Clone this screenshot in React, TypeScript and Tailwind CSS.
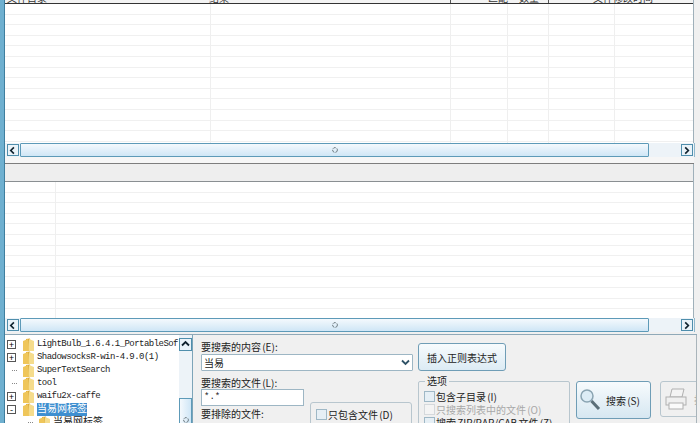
import React from "react";

const mono = "font-['Liberation_Mono','Noto_Sans_CJK_SC',monospace]";
const cjk = "font-['Noto_Sans_CJK_SC','Liberation_Sans',sans-serif]";

function Arrow({ dir }: { dir: "left" | "right" | "up" }) {
  const d = dir === "left" ? "M6.5 2 L3 5.5 L6.5 9" : dir === "right" ? "M3.5 2 L7 5.5 L3.5 9" : "M2 6.5 L5.5 3 L9 6.5";
  return (
    <svg width="11" height="11" viewBox="0 0 11 11">
      <path d={d} fill="none" stroke="#10222e" strokeWidth="1.8" />
    </svg>
  );
}

function ScrollGrip() {
  return (
    <svg width="8" height="8" viewBox="0 0 8 8">
      <circle cx="4" cy="4" r="2.4" fill="none" stroke="#6d7a80" strokeWidth="1" strokeDasharray="3 1" />
    </svg>
  );
}

function HScroll() {
  return (
    <div className="h-[14px] mr-[5px] flex items-center bg-[#edf3f8] pl-[2px] pr-[1px] border-r border-[#8fb8cc]">
      <div className="w-[12px] h-[12px] border border-[#4f8eac] bg-[#eaf3f9] flex items-center justify-center shrink-0">
        <Arrow dir="left" />
      </div>
      <div className="w-[629px] h-[14px] border border-[#5d9ab8] bg-gradient-to-b from-[#f4f9fd] to-[#cfe6f6] rounded-[1px] flex items-center justify-center shrink-0 ml-[1px]">
        <ScrollGrip />
      </div>
      <div className="flex-1" />
      <div className="w-[12px] h-[12px] border border-[#4f8eac] bg-[#eaf3f9] flex items-center justify-center shrink-0">
        <Arrow dir="right" />
      </div>
    </div>
  );
}

function Grid({ cols, height }: { cols: number[]; height: number }) {
  const rows = Array.from({ length: Math.floor(height / 10.6) });
  return (
    <div className="relative bg-white overflow-hidden" style={{ height }}>
      {rows.map((_, i) => (
        <div key={i} className="h-[10.6px] border-b border-[#f0f0f0]" />
      ))}
      {cols.map((x) => (
        <div key={x} className="absolute top-0 bottom-0 w-px bg-[#efefef]" style={{ left: x }} />
      ))}
    </div>
  );
}

function Folder() {
  return (
    <svg width="16" height="14" viewBox="0 0 16 14" className="shrink-0">
      <path d="M6 1 L10 0.5 L11 13 L6 13 Z" fill="#d9a93a" />
      <path d="M9 1 L14 3 L14 13 L8 13 Z" fill="#f5dc8c" />
      <path d="M3 3 L8 1 L9 13 L3 13 Z" fill="#efc65a" />
    </svg>
  );
}

function Tree({ label, sign, selected, indent, zh }: { label: string; sign?: string; selected?: boolean; indent?: boolean; zh?: boolean }) {
  return (
    <div className={`h-[13px] flex items-center ${indent ? "pl-[16px]" : ""}`}>
      <div className="w-[11px] flex justify-center shrink-0">
        {sign ? (
          <div className="w-[9px] h-[9px] border border-[#555] bg-white text-[9px] leading-[7px] text-center text-black">{sign}</div>
        ) : (
          <div className="w-[8px] border-t border-dotted border-[#888] ml-[6px]" />
        )}
      </div>
      <div className="ml-[3px]">
        <Folder />
      </div>
      <span
        className={`ml-[1px] whitespace-nowrap leading-[13px] ${zh ? "text-[10px]" : "text-[9px] tracking-[-0.54px]"} ${mono} ${
          selected ? "bg-[#3f8fd0] text-white" : "text-[#222]"
        }`}
      >
        {label}
      </span>
    </div>
  );
}

function Check({ label, off }: { label: string; off?: boolean }) {
  return (
    <div className="h-[13px] flex items-center">
      <div className={`w-[11px] h-[11px] border ${off ? "border-[#d5d9dc] bg-[#f4f4f4]" : "border-[#9fb8c6] bg-[#e6eff5]"} shrink-0`} />
      <span className={`ml-[1px] whitespace-nowrap text-[10px] leading-[13px] [word-spacing:-1px] ${cjk} ${off ? "text-[#a8a8a8]" : "text-[#222]"}`}>{label}</span>
    </div>
  );
}

export default function App() {
  return (
    <div className={`w-[700px] h-[423px] overflow-hidden bg-[#f0f0f0] flex ${cjk}`}>
      <div className="w-[5px] shrink-0 bg-[#6fb0d0] border-r border-[#3f7f9f]" />
      <div className="flex-1 flex flex-col min-w-0">
        {/* upper result list */}
        <div className="mr-[6px] border-r border-[#9fb0ba]">
          <div className="h-[3px] relative overflow-hidden bg-[#f3f3f3]">
            <div className="absolute bottom-0 left-[2px] text-[10px] leading-[10px] text-[#333]">文件目录</div>
            <div className="absolute bottom-0 left-[204px] text-[10px] leading-[10px] text-[#333]">结果</div>
            <div className="absolute bottom-0 left-[445px] w-px h-[3px] bg-[#555]" />
            <div className="absolute bottom-0 left-[483px] text-[10px] leading-[10px] text-[#333]">匹配</div>
            <div className="absolute bottom-0 left-[514px] text-[10px] leading-[10px] text-[#333]">数量</div>
            <div className="absolute bottom-0 left-[543px] w-px h-[3px] bg-[#555]" />
            <div className="absolute bottom-0 left-[588px] text-[10px] leading-[10px] text-[#333]">文件修改时间</div>
          </div>
          <div className="h-px bg-[#333]" />
          <Grid cols={[205, 445, 502, 543, 609]} height={139} />
        </div>
        <HScroll />
        <div className="h-[7px] border-b border-[#7d7d7d] bg-[#f6f6f6] mr-[6px]" />
        {/* lower panel */}
        <div className="mr-[6px] border-r border-[#9fb0ba]">
          <div className="h-[18px] bg-[#eeeeee] border-b border-[#8a8f92]" />
          <Grid cols={[50]} height={136} />
        </div>
        <HScroll />
        <div className="h-[3px] mr-[3px] border-b border-[#8fa9b8]" />
        {/* search form */}
        <div className="flex-1 flex min-h-0 mr-[3px] border-r border-[#a9b4ba] overflow-hidden">
          <div className="w-[188px] shrink-0 flex bg-white border-r border-[#7da4b8] overflow-hidden">
            <div className="flex-1 pt-[3px] overflow-hidden pl-[1px]">
              <Tree label="LightBulb_1.6.4.1_PortableSof" sign="+" />
              <Tree label="ShadowsocksR-win-4.9.0(1)" sign="+" />
              <Tree label="SuperTextSearch" />
              <Tree label="tool" />
              <Tree label="waifu2x-caffe" sign="+" />
              <Tree label="当易网标签" sign="-" selected zh />
              <Tree label="当易网标签" indent zh />
            </div>
            <div className="w-[13px] shrink-0 bg-[#edf3f8] flex flex-col">
              <div className="h-[13px] mt-[3px] border border-[#4f8eac] bg-[#eaf3f9] flex items-center justify-center">
                <Arrow dir="up" />
              </div>
              <div className="mt-[47px] flex-1 border border-[#5d9ab8] bg-gradient-to-r from-[#f4f9fd] to-[#cfe6f6] flex justify-center pt-[17px]">
                <ScrollGrip />
              </div>
            </div>
          </div>
          <div className="w-[8px] shrink-0" />
          <div className="flex-1 flex min-w-0 text-[#222]">
            <div className="w-[217px] shrink-0 pt-[5px]">
              <div className="text-[10px] leading-[13px] [word-spacing:-1px]">要搜索的内容 (E):</div>
              <div className="w-[212px] h-[17px] bg-white border border-[#9db6c4] rounded-[1px] flex items-center justify-between px-[2px] mt-[1px]">
                <span className="text-[10px] leading-[15px]">当易</span>
                <svg width="9" height="7" viewBox="0 0 9 7">
                  <path d="M1 1.5 L4.5 5 L8 1.5" fill="none" stroke="#2f5266" strokeWidth="1.8" />
                </svg>
              </div>
              <div className="text-[10px] leading-[13px] mt-[5px] [word-spacing:-1px]">要搜索的文件 (L):</div>
              <div className="flex">
                <div className={`w-[103px] h-[17px] bg-white border border-[#9db6c4] text-[9px] leading-[15px] px-[2px] ${mono} shrink-0`}>*.*</div>
                <div className="ml-[6px] w-[102px] h-[30px] mt-[13px] border border-[#b8c6ce] rounded-[3px] px-[5px] pt-[5px] shrink-0">
                  <Check label="只包含文件 (D)" />
                  <div className="pl-[13px] text-[10px] leading-[13px] whitespace-nowrap">使用正则匹配</div>
                </div>
              </div>
              <div className="text-[10px] leading-[13px] -mt-[25px]">要排除的文件:</div>
            </div>
            <div className="w-[158px] shrink-0 pt-[8px]">
              <div className="w-[88px] h-[28px] rounded-[3px] border border-[#6f9db6] bg-gradient-to-b from-[#f7fbfd] to-[#dcebf4] flex items-center justify-center text-[10px]">
                插入正则表达式
              </div>
              <div className="relative w-[152px] h-[50px] mt-[10px] border border-[#b8c6ce] rounded-[2px] px-[5px] pt-[8px]">
                <div className="absolute -top-[8px] left-[6px] bg-[#f0f0f0] px-[2px] text-[10px] leading-[14px]">选项</div>
                <Check label="包含子目录 (I)" />
                <Check label="只搜索列表中的文件 (O)" off />
                <Check label="搜索 ZIP/RAR/CAB 文件 (Z)" />
              </div>
            </div>
            <div className="pt-[46px] flex gap-[9px]">
              <div className="w-[75px] h-[38px] shrink-0 rounded-[3px] border border-[#6f9db6] bg-gradient-to-b from-[#f7fbfd] to-[#d6e7f1] flex items-center pl-[2px]">
                <svg width="22" height="24" viewBox="0 0 22 24">
                  <circle cx="8" cy="8" r="6" fill="#dcecf5" stroke="#8aa4b2" strokeWidth="1.5" />
                  <path d="M12.5 13 L20 21" stroke="#5b6e78" strokeWidth="3" />
                </svg>
                <span className="ml-[5px] text-[10px] whitespace-nowrap [word-spacing:-1px]">搜索 (S)</span>
              </div>
              <div className="w-[75px] h-[36px] shrink-0 rounded-[3px] border border-[#b8c6ce] bg-[#f0f0f0] flex items-center pl-[3px]">
                <svg width="24" height="24" viewBox="0 0 24 24">
                  <path d="M6 10 L8 2 L20 2 L18 10 Z" fill="#f4f4f4" stroke="#b0b0b0" />
                  <rect x="2" y="10" width="20" height="8" fill="#f0f0f0" stroke="#b0b0b0" />
                  <rect x="5" y="16" width="14" height="6" fill="#fafafa" stroke="#b0b0b0" />
                </svg>
                <span className="ml-[6px] text-[10px] text-[#aaa] whitespace-nowrap">打印</span>
              </div>
            </div>
          </div>
        </div>
      </div>
    </div>
  );
}
